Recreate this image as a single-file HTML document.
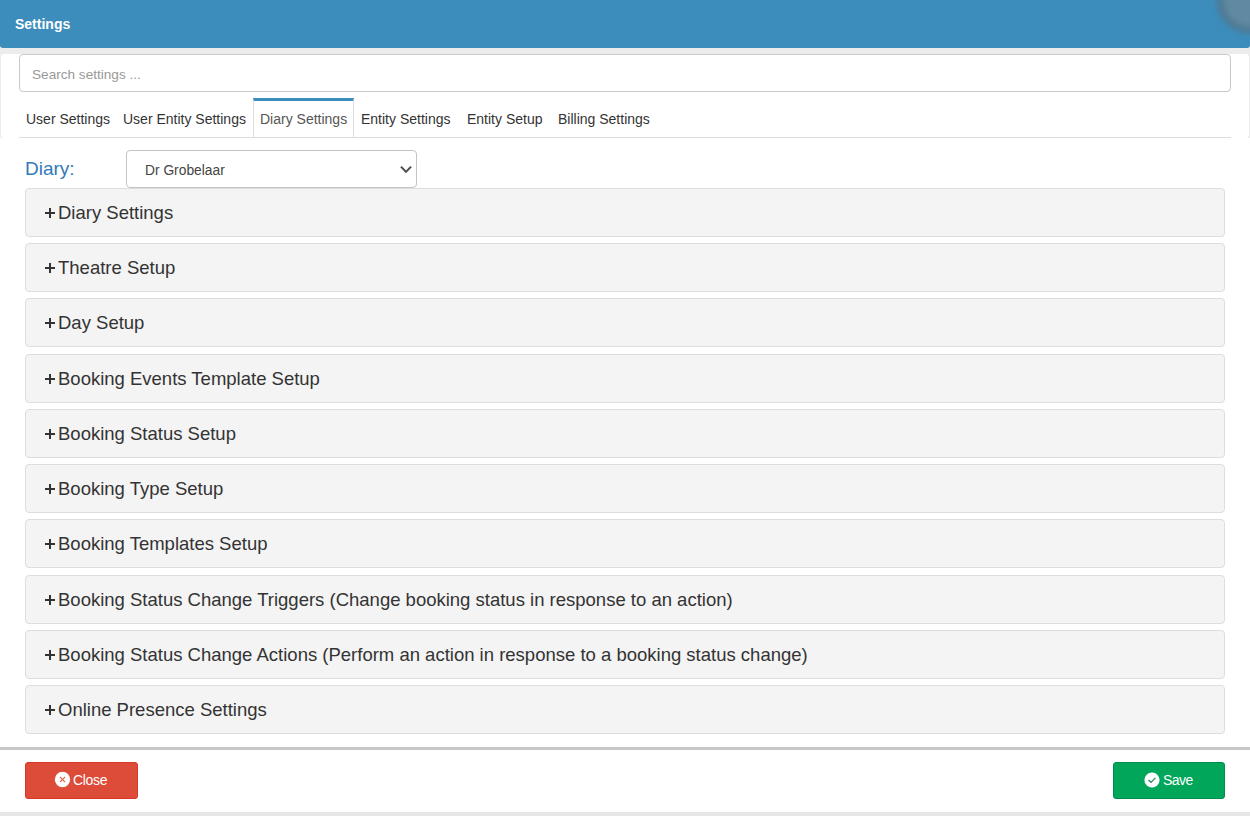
<!DOCTYPE html>
<html><head><meta charset="utf-8">
<style>
*{box-sizing:border-box;margin:0;padding:0}
html,body{width:1250px;height:816px;overflow:hidden;background:#ececec;font-family:"Liberation Sans",sans-serif;color:#333}
.hdr{position:absolute;left:0;top:0;width:1250px;height:48px;background:#3c8dbc;border-radius:0 0 3px 3px}
.hdr .t{position:absolute;left:15px;top:16px;font-size:14px;font-weight:bold;color:#fff;line-height:17px}
.hdr{overflow:hidden}.blob{position:absolute;left:1217px;top:-33px;width:66px;height:66px;border-radius:50%;background:#6089a2;box-shadow:inset 0 0 0 6px #4f7690;filter:blur(3px)}
.panel{position:absolute;left:1px;top:54px;width:1248px;height:84px;background:#fff;border-radius:3px}.panel2{position:absolute;left:0;top:138px;width:1250px;height:609px;background:#fff}
.search{position:absolute;left:19px;top:54px;width:1212px;height:38px;border:1px solid #c9c9c9;border-radius:4px;background:#fff}
.search span{position:absolute;left:12px;top:11.7px;font-size:13.6px;color:#999;line-height:16px}
.tabline{position:absolute;left:19px;top:137px;width:1212px;height:1px;background:#ddd}
.tab{position:absolute;top:111px;font-size:14px;line-height:16px;color:#333}
.atab{position:absolute;left:253px;top:98px;width:101px;height:40px;border:1px solid #ddd;border-top:3px solid #3c8dbc;border-bottom:none;background:#fff}
.lbl{position:absolute;left:25px;top:158px;font-size:19px;color:#337ab7;line-height:22px}
.sel{position:absolute;left:126px;top:150px;width:291px;height:38px;border:1px solid #c4c4c4;border-radius:4px;background:#fff}
.sel span{position:absolute;left:18px;top:12px;font-size:13.8px;line-height:16px;color:#444}
.acc{position:absolute;left:25px;width:1200px;height:49px;background:#f4f4f4;border:1px solid #ddd;border-radius:4px}
.acc span{position:absolute;left:32px;top:13px;font-size:18.5px;line-height:22px;color:#333}
.acc i{position:absolute;left:19px;top:19.4px;width:10px;height:9.5px}.acc i:before{content:"";position:absolute;left:0;top:3.9px;width:10px;height:1.8px;background:#333}.acc i:after{content:"";position:absolute;left:4.1px;top:0;width:1.9px;height:9.5px;background:#333}
.footline{position:absolute;left:0;top:747px;width:1250px;height:3px;background:#c8c8c8}
.foot{position:absolute;left:0;top:750px;width:1250px;height:62px;background:#fff}
.btm{position:absolute;left:0;top:812px;width:1250px;height:4px;background:#e6e6e6}
.btn{position:absolute;top:762px;height:37px;border-radius:3px;color:#fff;font-size:14px;line-height:16px}
.close{left:25px;width:113px;background:#dd4b39;border:1px solid #d73925}
.save{left:1113px;width:112px;background:#00a65a;border:1px solid #008d4c}
</style></head><body>
<div class="hdr"><div class="t">Settings</div><div class="blob"></div></div>
<div class="panel"></div><div class="panel2"></div>
<div class="search"><span>Search settings ...</span></div>
<div class="atab"></div>
<div class="tabline"></div>
<div class="tab" style="left:26px">User Settings</div>
<div class="tab" style="left:123px">User Entity Settings</div>
<div class="tab" style="left:260px;color:#555">Diary Settings</div>
<div class="tab" style="left:361px">Entity Settings</div>
<div class="tab" style="left:467px">Entity Setup</div>
<div class="tab" style="left:558px">Billing Settings</div>
<div class="lbl">Diary:</div>
<div class="sel"><span>Dr Grobelaar</span>
<svg style="position:absolute;left:273px;top:14px" width="12" height="9" viewBox="0 0 12 9"><path d="M1 1.6 L6 6.9 L11 1.6" fill="none" stroke="#4d4d4d" stroke-width="2"/></svg>
</div>
<div class="acc" style="top:188px"><i></i><span>Diary Settings</span></div>
<div class="acc" style="top:243px"><i></i><span>Theatre Setup</span></div>
<div class="acc" style="top:298px"><i></i><span>Day Setup</span></div>
<div class="acc" style="top:354px"><i></i><span>Booking Events Template Setup</span></div>
<div class="acc" style="top:409px"><i></i><span>Booking Status Setup</span></div>
<div class="acc" style="top:464px"><i></i><span>Booking Type Setup</span></div>
<div class="acc" style="top:519px"><i></i><span>Booking Templates Setup</span></div>
<div class="acc" style="top:575px"><i></i><span>Booking Status Change Triggers (Change booking status in response to an action)</span></div>
<div class="acc" style="top:630px"><i></i><span>Booking Status Change Actions (Perform an action in response to a booking status change)</span></div>
<div class="acc" style="top:685px"><i></i><span>Online Presence Settings</span></div>
<div class="footline"></div>
<div class="foot"></div>
<div class="btm"></div>
<div class="btn close"><svg style="position:absolute;left:28px;top:8px" width="17" height="17" viewBox="0 0 17 17"><circle cx="8.5" cy="8.5" r="7.7" fill="#fff"/><path d="M6 6 L11 11 M11 6 L6 11" stroke="#e36a55" stroke-width="1.1"/></svg><span style="position:absolute;left:47px;top:9px;letter-spacing:-0.3px">Close</span></div>
<div class="btn save"><svg style="position:absolute;left:30px;top:8.5px" width="16" height="16" viewBox="0 0 16 16"><circle cx="8" cy="8" r="7.6" fill="#fff"/><path d="M4.6 8 L7 10.3 L11.4 5.9" fill="none" stroke="#23875a" stroke-width="1.2"/></svg><span style="position:absolute;left:49px;top:9px;letter-spacing:-0.5px">Save</span></div>
</body></html>
